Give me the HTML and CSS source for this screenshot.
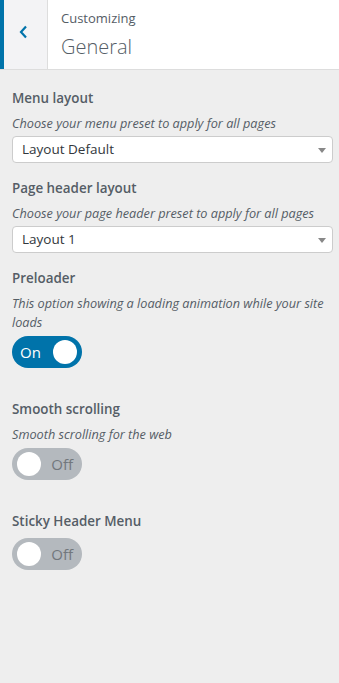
FILE: index.html
```
<!doctype html>
<html>
<head>
<meta charset="utf-8">
<title>Customizing General</title>
<link rel="stylesheet" href="styles.css">
</head>
<body>
<div class="panel">
	<div class="head">
		<a href="javascript:;" class="back">
			<svg width="12" height="14" viewBox="0 0 12 14"><path d="M8 1.5 L3 7 L8 12.5" fill="none" stroke="#0073aa" stroke-width="2.2"/></svg>
		</a>
		<div class="head-text">
			<span class="action">Customizing</span>
			<h3 class="title">General</h3>
		</div>
	</div>
	<ul class="controls">
		<li class="control">
			<span class="label">Menu layout</span>
			<span class="desc">Choose your menu preset to apply for all pages</span>
			<div class="select"><span>Layout Default</span><i class="arrow"></i></div>
		</li>
		<li class="control">
			<span class="label">Page header layout</span>
			<span class="desc">Choose your page header preset to apply for all pages</span>
			<div class="select"><span>Layout 1</span><i class="arrow"></i></div>
		</li>
		<li class="control toggle-row">
			<span class="label">Preloader</span>
			<span class="desc">This option showing a loading animation while your site loads</span>
			<div class="switch on"><span class="txt">On</span><span class="knob"></span></div>
		</li>
		<li class="control toggle-row">
			<span class="label">Smooth scrolling</span>
			<span class="desc">Smooth scrolling for the web</span>
			<div class="switch"><span class="knob"></span><span class="txt">Off</span></div>
		</li>
		<li class="control toggle-row">
			<span class="label">Sticky Header Menu</span>
			<div class="switch"><span class="knob"></span><span class="txt">Off</span></div>
		</li>
	</ul>
</div>
</body>
</html>
```
FILE: styles.css
```
*{margin:0;padding:0;box-sizing:border-box}
body{background:#eee;font-family:"Open Sans","Noto Sans",sans-serif;color:#555d66;width:339px;height:683px;overflow:hidden}
.head{display:flex;height:70px;background:#fff;border-bottom:1px solid #ddd}
.back{display:flex;align-items:center;justify-content:center;width:48px;background:#f3f3f5;border-left:4px solid #0073aa;border-right:1px solid #ddd;padding:0 4px 6px 0}
.head-text{padding:9px 0 0 13px}
.action{display:block;font-size:13px;line-height:18px;color:#555d66}
.title{font-size:20px;font-weight:300;line-height:28px;margin-top:6px;color:#555d66}
.controls{list-style:none;padding:18px 6px 0 12px}
.control{margin-bottom:15px}
.label{display:block;font-size:13.4px;font-weight:600;line-height:20px;color:#555d66}
.desc{display:block;font-size:12.7px;font-style:italic;line-height:19px;margin-top:6px;color:#555d66}
.select{position:relative;height:27px;margin-top:3px;background:#fff;border:1px solid #ccc;border-radius:4px;font-size:13.5px;line-height:25px;padding-left:9px;color:#32373c}
.select .arrow{position:absolute;right:6px;top:11px;border-left:4px solid transparent;border-right:4px solid transparent;border-top:5px solid #888}
.toggle-row{margin-bottom:31px}
.switch{display:flex;align-items:center;justify-content:space-between;width:70px;height:32px;margin-top:7px;border-radius:16px;background:#b4b9be;padding:0 5px 0 5px;font-size:15px;color:#72777c}
.desc + .switch{margin-top:4px}
.switch.on{background:#0073aa;color:#fff;padding-left:8px}
.switch .knob{width:24px;height:24px;border-radius:50%;background:#fff}
.switch .txt{padding-right:4px}
```
